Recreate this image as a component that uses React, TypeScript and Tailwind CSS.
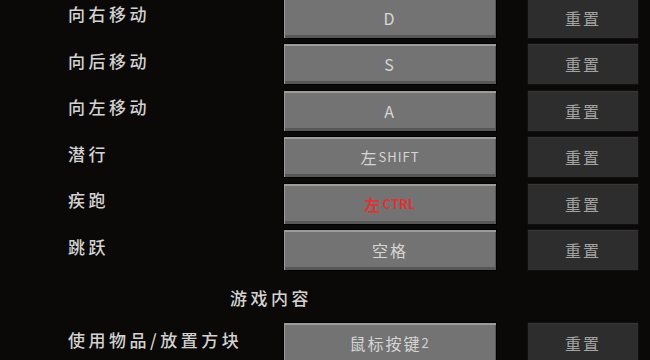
import React from 'react';

type Bind = { label: string; key: React.ReactNode; conflict?: boolean };

const movement: Bind[] = [
  { label: '向右移动', key: 'D' },
  { label: '向后移动', key: 'S' },
  { label: '向左移动', key: 'A' },
  { label: '潜行', key: <><span>左</span><span className="text-[13px] tracking-[1px]">SHIFT</span></> },
  { label: '疾跑', key: <><span className="font-bold">左</span><span className="text-[13px] tracking-[0px] font-bold">CTRL</span></>, conflict: true },
  { label: '跳跃', key: '空格' },
];

const gameplay: Bind[] = [{ label: '使用物品/放置方块', key: <><span>鼠标按键</span><span className="text-[13px]">2</span></> }];

const font = { fontFamily: '"Noto Sans CJK SC", "DejaVu Sans Mono", monospace' };

function Row({ b }: { b: Bind }) {
  return (
    <div className="flex items-center h-[42px]">
      <span className="w-[215px] mb-[7px] text-[17px] tracking-[3.5px] text-[#d2d2d2] font-medium">{b.label}</span>
      <button
        className={
          'w-[214px] h-[42px] flex items-center justify-center border border-black bg-[#737373] shadow-[inset_1px_2px_0_#9c9c9c,inset_-1px_-3px_0_#575757] text-[16px] tracking-[2px] ' +
          (b.conflict ? 'text-[#e03434]' : 'text-[#d6d6d6]')
        }
      >
        {b.key}
      </button>
      <button className="ml-[30px] w-[112px] h-[42px] flex items-center justify-center border border-[#111] bg-[#2d2d2d] shadow-[inset_0_1px_0_#363636] text-[16px] tracking-[2px] text-[#a3a3a3]">
        重置
      </button>
    </div>
  );
}

export default function App() {
  return (
    <div className="w-[650px] h-[360px] overflow-hidden bg-[#0b0908]" style={font}>
      <div className="flex flex-col gap-[4.5px] mt-[-3.5px] pl-[68px]">
        {movement.map((b) => (
          <Row key={b.label} b={b} />
        ))}
        <div className="h-[42px] flex items-center">
          <span className="ml-[162px] mt-[3px] text-[17px] tracking-[3.5px] text-[#d2d2d2] font-medium">游戏内容</span>
        </div>
        {gameplay.map((b) => (
          <Row key={b.label} b={b} />
        ))}
      </div>
    </div>
  );
}
